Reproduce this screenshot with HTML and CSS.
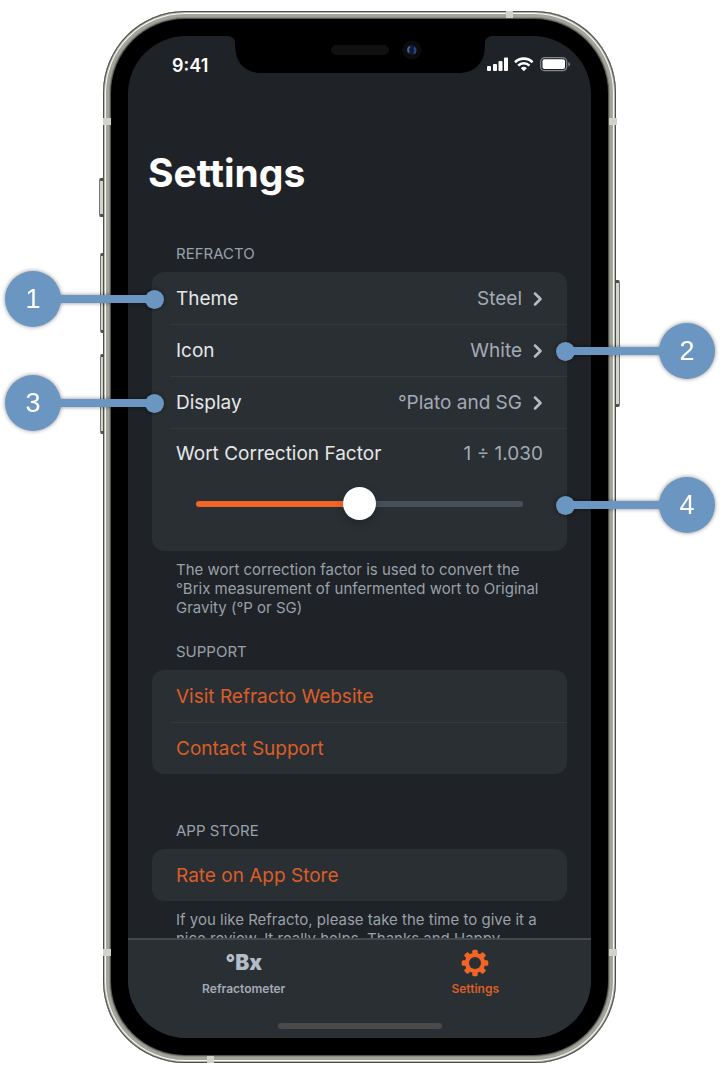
FILE: index.html
```html
<!DOCTYPE html>
<html lang="en">
<head>
<meta charset="utf-8">
<meta name="viewport" content="width=device-width, initial-scale=1">
<title>Refracto Settings</title>
<link rel="stylesheet" href="styles.css">
</head>
<body>
<main class="stage">
  <div class="phone">
    <span class="key key-mute"></span>
    <span class="key key-up"></span>
    <span class="key key-down"></span>
    <span class="key key-power"></span>
    <div class="frame">
      <span class="band band-top"></span>
      <span class="band band-bottom"></span>
      <span class="band band-lt"></span>
      <span class="band band-rt"></span>
      <span class="band band-lb"></span>
      <span class="band band-rb"></span>
      <div class="bezel">
        <div class="screen">
          <svg class="notch" viewBox="0 0 262 38" aria-hidden="true">
            <path d="M0 0H262Q256 1 256 8V9C256 27 246 37 229 37H33C16 37 6 27 6 9V8Q6 1 0 0Z" fill="#000"/>
            <rect x="102" y="9" width="58" height="10" rx="5" fill="#101010"/>
            <circle cx="183" cy="14" r="9.500" fill="#0c0c0d"/>
            <circle cx="183" cy="14" r="5" fill="#14183a"/>
            <path d="M181 10.500a4 4 0 0 0-1 6" stroke="#3a6796" stroke-width="2" fill="none"/>
            <path d="M185 11.500a4 4 0 0 1 0 6" stroke="#2c4a82" stroke-width="2" fill="none"/>
          </svg>
          <header class="status">
            <span class="time">9:41</span>
            <svg class="status-icons" viewBox="0 0 84 16" aria-hidden="true">
              <g fill="#fff">
                <rect x="0" y="9" width="4" height="5" rx="1"/>
                <rect x="6" y="7" width="4" height="7" rx="1"/>
                <rect x="11.500" y="4" width="4" height="10" rx="1"/>
                <rect x="17" y="0.500" width="4" height="13.500" rx="1"/>
              </g>
              <g fill="none" stroke="#fff" stroke-width="2.600">
                <path d="M28 5.200a12.700 12.700 0 0 1 17.600 0"/>
                <path d="M31.200 8.600a8 8 0 0 1 11.200 0"/>
              </g>
              <path d="M33.800 11.200a4.400 4.400 0 0 1 6 0L36.800 14.200Z" fill="#fff"/>
              <rect x="53.700" y="0.700" width="26" height="13" rx="4" fill="none" stroke="#84878a" stroke-width="1.200"/>
              <rect x="55.500" y="2.300" width="22.500" height="9.700" rx="2" fill="#fff"/>
              <path d="M81.300 5v4.500q1.700-.8 1.700-2.250T81.300 5Z" fill="#84878a"/>
            </svg>
          </header>
          <div class="content">
            <h1 class="title">Settings</h1>

            <section class="section">
              <h2 class="label">REFRACTO</h2>
              <div class="card">
                <button class="row" type="button">
                  <span class="name">Theme</span><span class="value">Steel</span>
                  <svg class="chevron" viewBox="0 0 10 14" aria-hidden="true"><path d="M2 1.500L7.500 7L2 12.500"/></svg>
                </button>
                <button class="row" type="button">
                  <span class="name">Icon</span><span class="value">White</span>
                  <svg class="chevron" viewBox="0 0 10 14" aria-hidden="true"><path d="M2 1.500L7.500 7L2 12.500"/></svg>
                </button>
                <button class="row" type="button">
                  <span class="name">Display</span><span class="value">°Plato and SG</span>
                  <svg class="chevron" viewBox="0 0 10 14" aria-hidden="true"><path d="M2 1.500L7.500 7L2 12.500"/></svg>
                </button>
                <div class="row row-slider">
                  <label class="name" for="wort">Wort Correction Factor</label>
                  <output class="value" for="wort">1 ÷ 1.030</output>
                  <input class="slider" id="wort" type="range" min="1" max="1.06" step="0.001" value="1.03">
                </div>
              </div>
              <p class="note">The wort correction factor is used to convert the °Brix measurement of unfermented wort to Original Gravity (°P or SG)</p>
            </section>

            <section class="section section-support">
              <h2 class="label">SUPPORT</h2>
              <div class="card">
                <a class="row link" href="#website">Visit Refracto Website</a>
                <a class="row link" href="#support">Contact Support</a>
              </div>
            </section>

            <section class="section section-store">
              <h2 class="label">APP STORE</h2>
              <div class="card">
                <a class="row link" href="#rate">Rate on App Store</a>
              </div>
              <p class="note">If you like Refracto, please take the time to give it a nice review. It really helps. Thanks and Happy</p>
            </section>
          </div>
          <nav class="tabs">
            <a class="tab" href="#refractometer"><span class="tab-icon">°Bx</span><span>Refractometer</span></a>
            <a class="tab tab-active" href="#settings" aria-current="page">
              <svg class="tab-icon gear" viewBox="-14 -14 28 28" aria-hidden="true">
                <g fill="#f26527">
                  <g id="teeth"><rect x="-2.700" y="-13.300" width="5.400" height="26.600" rx="1.500"/><rect x="-13.300" y="-2.700" width="26.600" height="5.400" rx="1.500"/></g>
                  <use href="#teeth" transform="rotate(45)"/>
                  <circle r="10.200"/>
                </g>
                <circle r="6" fill="#2a2f33"/>
              </svg>
              <span>Settings</span>
            </a>
            <span class="home"></span>
          </nav>
        </div>
      </div>
    </div>
  </div>

  <div class="callout callout-1"><span class="badge">1</span><span class="line"></span><span class="dot"></span></div>
  <div class="callout callout-right callout-2"><span class="badge">2</span><span class="line"></span><span class="dot"></span></div>
  <div class="callout callout-3"><span class="badge">3</span><span class="line"></span><span class="dot"></span></div>
  <div class="callout callout-right callout-4"><span class="badge">4</span><span class="line"></span><span class="dot"></span></div>
</main>
</body>
</html>
```
FILE: styles.css
```css
* { box-sizing: border-box; }

body {
  margin: 0;
  background: #fff;
  font-family: Inter, "Liberation Sans", sans-serif;
}

h1, h2, p { margin: 0; font-weight: 400; }

.stage {
  position: relative;
  padding: 11px 104px 11px 103px;
}

.phone { position: relative; }

.frame {
  position: relative;
  aspect-ratio: 513 / 1052;
  display: flex;
  padding: 8px;
  border-radius: 82px;
  background: #55554f;
  box-shadow:
    inset 0 0 0 1px #4e4f49,
    inset 0 0 0 2px #b5b6b0,
    inset 0 0 0 3px #fafaf5,
    inset 0 0 0 6px #a3a49c,
    inset 0 0 0 7px #8b8c84;
}

.bezel {
  flex: 1;
  display: flex;
  min-width: 0;
  padding: 17px;
  border-radius: 74px;
  background: #000;
}

.screen {
  position: relative;
  flex: 1;
  display: flex;
  flex-direction: column;
  min-width: 0;
  overflow: hidden;
  border-radius: 58px;
  background: #1f2226;
}

/* Hardware details on the edge of the phone */
.key {
  position: absolute;
  width: 6px;
  border: 1px solid #73746e;
  border-block: 3px solid #50514b;
  border-radius: 2px;
  background: #d3d4ce;
}
.key-mute { left: -4px; top: 167px; height: 39px; }
.key-up { left: -3px; top: 242px; height: 80px; }
.key-down { left: -3px; top: 343px; height: 80px; }
.key-power { right: -4px; top: 269px; height: 127px; }

.band { position: absolute; background: #d2d2ca; }
.band-top, .band-bottom { width: 7px; height: 7px; }
.band-lt, .band-rt, .band-lb, .band-rb { width: 8px; height: 7px; }
.band-top { top: 0; right: 103px; }
.band-bottom { bottom: 0; left: 104px; }
.band-lt { left: 0; top: 107px; }
.band-rt { right: -1px; top: 107px; }
.band-lb { left: 0; bottom: 107px; }
.band-rb { right: -1px; bottom: 107px; }

.notch {
  position: absolute;
  top: 0;
  left: 50%;
  width: 262px;
  transform: translateX(-50%);
}

.status {
  display: flex;
  justify-content: space-between;
  align-items: center;
  height: 58px;
  padding: 0 20px 0 44px;
  color: #fff;
}
.time { font-size: 18px; font-weight: 600; }
.status-icons { width: 84px; height: 16px; }

.content {
  flex: 1;
  min-height: 0;
  overflow: hidden;
  padding: 54px 24px 0;
}

.title {
  margin-left: -4px;
  color: #fff;
  font-size: 39px;
  font-weight: 700;
  line-height: 50px;
}

.section { padding-top: 46px; }
.section-support { padding-top: 25px; }
.section-store { padding-top: 47px; }

.label {
  padding: 0 24px;
  color: #99a1aa;
  font-size: 15px;
  line-height: 20px;
}

.card {
  margin-top: 8px;
  border-radius: 12px;
  background: #2a2f33;
}

.row {
  position: relative;
  display: flex;
  align-items: center;
  width: 100%;
  height: 52px;
  padding: 1px 24px 0;
  border: 0;
  background: none;
  color: #e6e7e8;
  font-family: inherit;
  font-size: 19px;
  line-height: 24px;
  text-align: left;
}
.row + .row::before {
  content: "";
  position: absolute;
  top: 0;
  left: 18px;
  right: 0;
  height: 1px;
  background: #34393d;
}

.name { flex: 1; }
.value { color: #a4aab5; }

.chevron {
  width: 10px;
  height: 14px;
  margin-left: 11px;
  fill: none;
  stroke: #b4bcc8;
  stroke-width: 2.5px;
  stroke-linecap: round;
  stroke-linejoin: round;
}

.row-slider {
  flex-wrap: wrap;
  align-content: flex-start;
  height: 123px;
  padding-top: 14px;
}

.slider {
  appearance: none;
  flex: 0 0 100%;
  height: 34px;
  margin: 21px 0 0;
  padding: 0 20px;
  background: none;
}
.slider::-webkit-slider-runnable-track {
  height: 6px;
  border-radius: 3px;
  background: linear-gradient(90deg, #f26527 50%, #474f59 50%);
}
.slider::-webkit-slider-thumb {
  appearance: none;
  width: 33px;
  height: 33px;
  margin-top: -14px;
  border-radius: 50%;
  background: #fff;
  box-shadow: 0 4px 10px rgba(0, 0, 0, 0.2);
}

.note {
  padding: 9px 22px 0 24px;
  color: #99a1aa;
  font-size: 15px;
  line-height: 19px;
}

.link { color: #dc5d28; text-decoration: none; }

.tabs {
  position: relative;
  flex: none;
  display: flex;
  height: 100px;
  padding-top: 9px;
  border-top: 2px solid #45494c;
  background: #2a2f33;
}
.tab {
  flex: 1;
  display: flex;
  flex-direction: column;
  align-items: center;
  gap: 4px;
  color: #a4aab5;
  font-size: 12px;
  font-weight: 600;
  line-height: 16px;
  text-decoration: none;
}
.tab-icon {
  height: 28px;
  color: #b4bcc8;
  font-size: 21px;
  font-weight: 900;
  line-height: 28px;
}
.gear { width: 28px; }
.tab-active { color: #dc5d28; }
.home {
  position: absolute;
  bottom: 9px;
  left: 50%;
  width: 164px;
  height: 6px;
  border-radius: 3px;
  background: #4a4a4a;
  transform: translateX(-50%);
}

/* Numbered callouts */
.callout {
  position: absolute;
  left: 5px;
  display: flex;
  align-items: center;
  width: 159px;
  filter: drop-shadow(0 0 2px rgba(0, 0, 0, 0.45));
}
.callout-right {
  left: auto;
  right: 5px;
  flex-direction: row-reverse;
}
.badge {
  width: 56px;
  height: 56px;
  border-radius: 50%;
  background: #6b96c2;
  color: #fff;
  font-family: "Liberation Sans", sans-serif;
  font-size: 27px;
  line-height: 57px;
  text-align: center;
}
.line {
  flex: 1;
  height: 8px;
  margin: 0 -2px;
  background: #6b96c2;
}
.dot {
  width: 19px;
  height: 19px;
  border-radius: 50%;
  background: #6b96c2;
}
.callout-1 { top: 271px; }
.callout-2 { top: 323px; }
.callout-3 { top: 375px; }
.callout-4 { top: 477px; }
```
